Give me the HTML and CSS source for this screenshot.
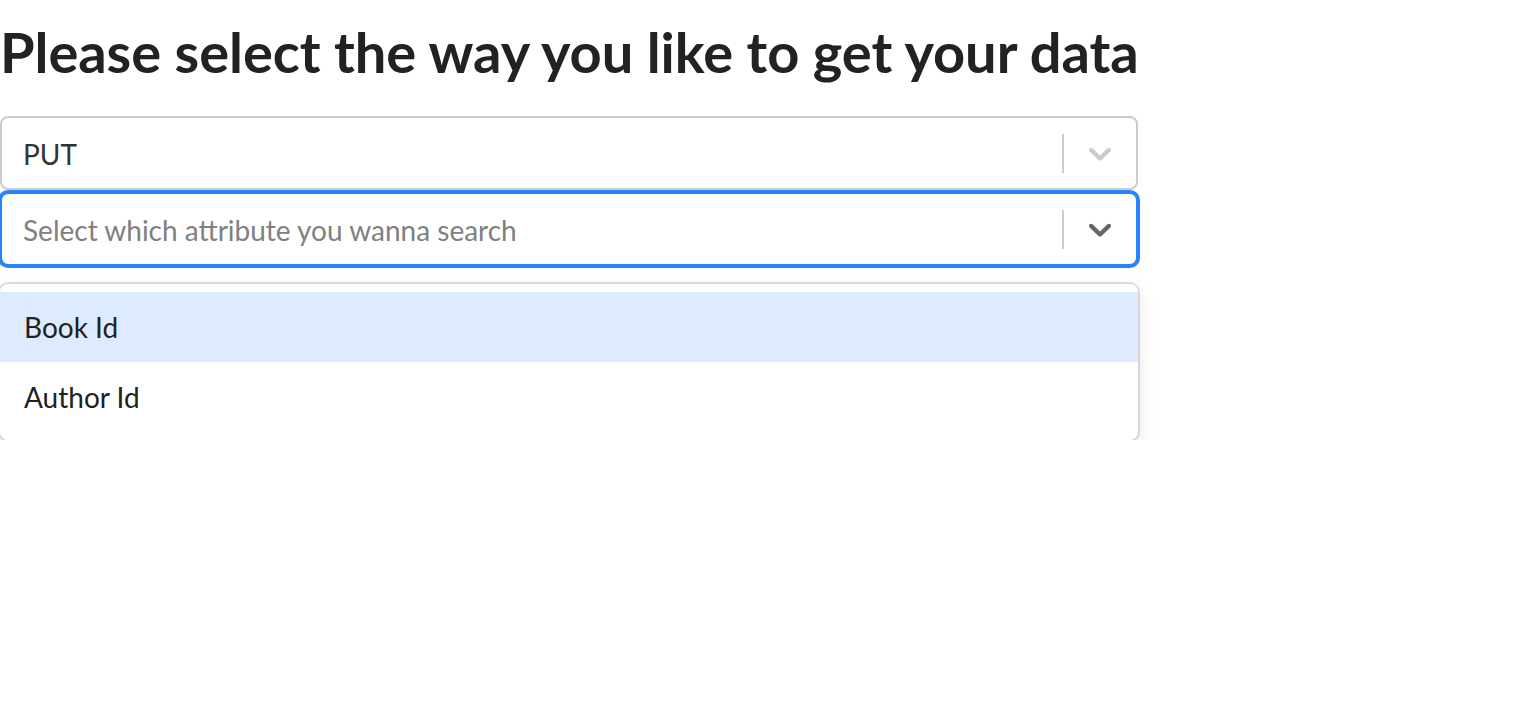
FILE: index.html
```html
<!DOCTYPE html>
<html lang="en">
<head>
<meta charset="utf-8">
<title>Select data</title>
<link rel="stylesheet" href="styles.css">
</head>
<body>
<div class="page">
  <h1 class="title">Please select the way you like to get your data</h1>
  <div class="select">
    <div class="value">PUT</div>
    <div class="indicators">
      <span class="separator"></span>
      <span class="indicator">
        <svg viewBox="0 0 20 20" width="38" height="38" aria-hidden="true"><path d="M4.516 7.548c0.436-0.446 1.043-0.481 1.576 0l3.908 3.747 3.908-3.747c0.533-0.481 1.141-0.446 1.574 0 0.436 0.445 0.408 1.197 0 1.615-0.406 0.418-4.695 4.502-4.695 4.502-0.217 0.223-0.502 0.335-0.787 0.335s-0.57-0.112-0.789-0.335c0 0-4.287-4.084-4.695-4.502s-0.436-1.17 0-1.615z"></path></svg>
      </span>
    </div>
  </div>
  <div class="select select--focused">
    <div class="value value--placeholder">Select which attribute you wanna search</div>
    <div class="indicators">
      <span class="separator"></span>
      <span class="indicator">
        <svg viewBox="0 0 20 20" width="38" height="38" aria-hidden="true"><path d="M4.516 7.548c0.436-0.446 1.043-0.481 1.576 0l3.908 3.747 3.908-3.747c0.533-0.481 1.141-0.446 1.574 0 0.436 0.445 0.408 1.197 0 1.615-0.406 0.418-4.695 4.502-4.695 4.502-0.217 0.223-0.502 0.335-0.787 0.335s-0.57-0.112-0.789-0.335c0 0-4.287-4.084-4.695-4.502s-0.436-1.17 0-1.615z"></path></svg>
      </span>
    </div>
  </div>
  <div class="menu">
    <div class="option option--focused">Book Id</div>
    <div class="option">Author Id</div>
  </div>
</div>
</body>
</html>
```

FILE: styles.css
```css
html, body {
  margin: 0;
  padding: 0;
  background: #ffffff;
}

body {
  font-family: Lato, "Open Sans", "Liberation Sans", sans-serif;
  color: #222222;
}

.page {
  width: 1138px;
}

.title {
  font-size: 56px;
  line-height: 68px;
  font-weight: 700;
  letter-spacing: -0.05px;
  margin: 18px 0 30px;
  color: #222222;
  white-space: nowrap;
}

.select {
  box-sizing: border-box;
  height: 74px;
  border: 2px solid #cccccc;
  border-radius: 8px;
  display: flex;
  align-items: center;
  background: #ffffff;
  position: relative;
}

.select--focused {
  margin-top: 2px;
  border-color: #2684ff;
  box-shadow: 0 0 0 2px #2684ff;
}

.value {
  flex: 1;
  padding: 3px 0 0 21px;
  font-size: 28px;
  line-height: 35px;
  color: #333333;
}

.value--placeholder {
  color: #808080;
}

.indicators {
  display: flex;
  align-items: center;
  align-self: stretch;
}

.separator {
  width: 2px;
  height: 39px;
  background: #cccccc;
}

.indicator {
  display: flex;
  align-items: center;
  padding: 0 17px 0 17px;
  fill: #cccccc;
}

.select--focused .indicator {
  fill: #666666;
}

.menu {
  margin-top: 18px;
  border-radius: 8px;
  background: #ffffff;
  box-shadow: 0 0 0 2px rgba(0, 0, 0, 0.12), 0 8px 21px rgba(0, 0, 0, 0.1);
  padding: 8px 0;
}

.option {
  height: 70px;
  line-height: 70px;
  padding: 0 24px;
  font-size: 28px;
  color: #222222;
}

.option--focused {
  background: #deebff;
}
```
